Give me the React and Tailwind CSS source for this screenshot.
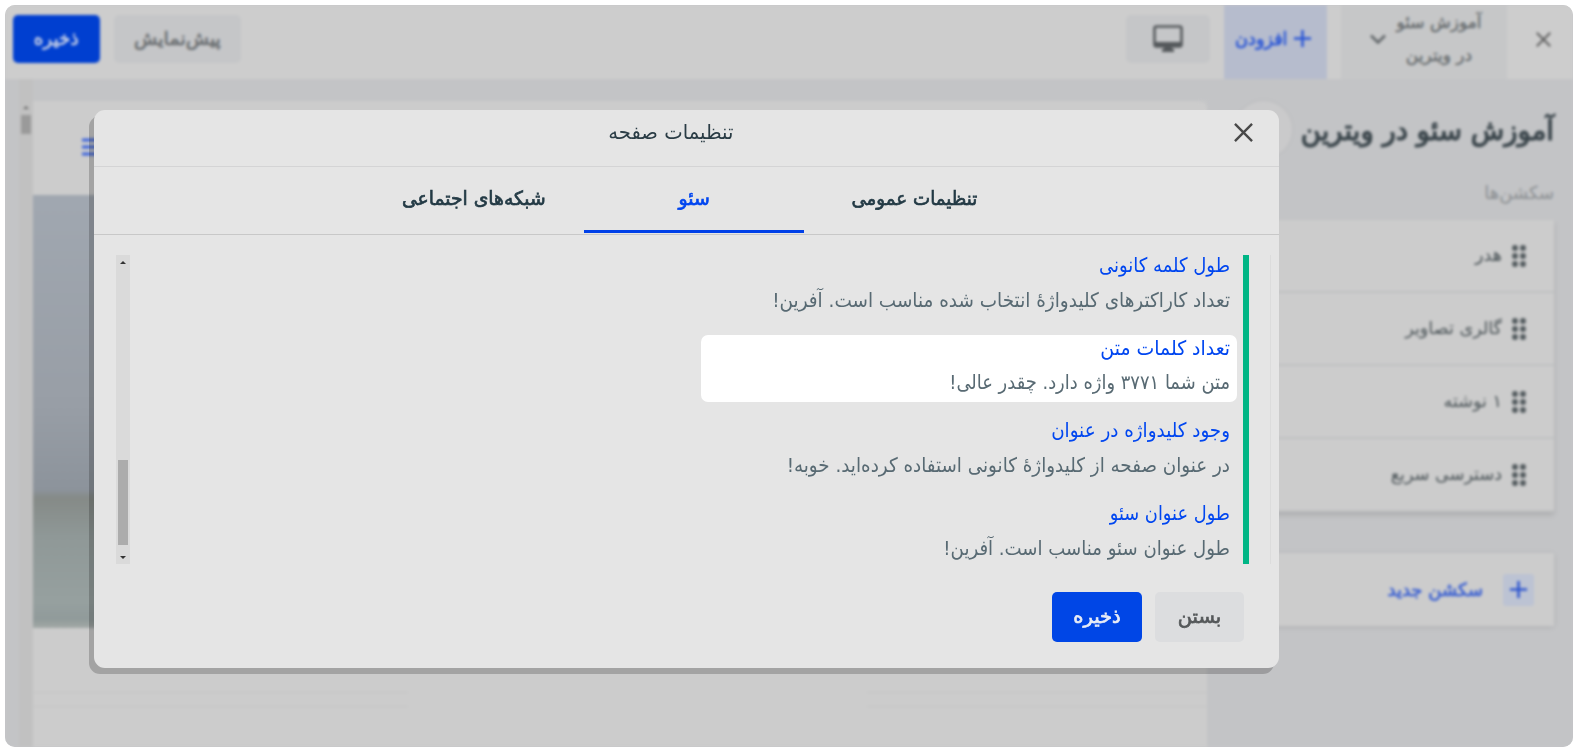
const sections = ['هدر', 'گالری تصاویر', '۱ نوشته', 'دسترسی سریع']

const checks = [
  {
    title: 'طول کلمه کانونی',
    titleFit: 'scale-x-[0.9]',
    text: 'تعداد کاراکترهای کلیدواژهٔ انتخاب شده مناسب است. آفرین!',
    textFit: 'scale-x-[0.92]',
  },
  {
    title: 'تعداد کلمات متن',
    titleFit: 'scale-x-[0.943]',
    text: 'متن شما ۳۷۷۱ واژه دارد. چقدر عالی!',
    textFit: 'scale-x-[0.895]',
    active: true,
  },
  {
    title: 'وجود کلیدواژه در عنوان',
    titleFit: 'scale-x-[0.915]',
    text: 'در عنوان صفحه از کلیدواژهٔ کانونی استفاده کرده‌اید. خوبه!',
    textFit: 'scale-x-[0.915]',
  },
  {
    title: 'طول عنوان سئو',
    titleFit: 'scale-x-[0.89]',
    text: 'طول عنوان سئو مناسب است. آفرین!',
    textFit: 'scale-x-[0.905]',
  },
]

function Cross({ className }) {
  return (
    <svg viewBox="0 0 20 20" className={className} fill="none" stroke="currentColor">
      <path d="M1 1 L19 19 M19 1 L1 19" />
    </svg>
  )
}

function Plus({ className }) {
  return (
    <svg viewBox="0 0 20 20" className={className} fill="none" stroke="currentColor" strokeWidth="2.7">
      <path d="M10 1 V19 M1 10 H19" />
    </svg>
  )
}

function Grip() {
  return (
    <svg viewBox="0 0 14 22" className="h-[22px] w-[14px] fill-[#50585c]">
      {[3, 11, 19].map(y => [3, 11].map(x => <circle key={x + '-' + y} cx={x} cy={y} r="2.9" />))}
    </svg>
  )
}

function TopBar() {
  return (
    <header className="flex h-[74px] shrink-0 items-center bg-[#cdcdcd] pl-2 whitespace-nowrap">
      <div className="flex w-[60px] justify-center pb-1.5 text-[#5c5c5c]">
        <Cross className="size-[15px] stroke-[2.4]" />
      </div>
      <div className="mr-1.5 flex h-full w-[166px] items-center justify-center gap-2.5 bg-[#c6c7c8] pb-1.5 pl-1 text-[#62676a]">
        <div className="text-center text-[17px] leading-[33px] [-webkit-text-stroke:0.3px]">
          <div>آموزش سئو</div>
          <div>در ویترین</div>
        </div>
        <svg viewBox="0 0 16 10" className="h-[10px] w-[16px]" fill="none" stroke="currentColor" strokeWidth="2.6">
          <path d="M1 1.5 L8 8.5 L15 1.5" />
        </svg>
      </div>
      <div className="mr-3.5 flex h-full w-[103px] items-center justify-center gap-[5px] bg-[#b6bccd] pr-[5px] pb-2 text-[18px] text-[#2a56d6] [-webkit-text-stroke:0.7px]">
        <Plus className="size-[19px]" />
        <span className="origin-right scale-x-[0.98]">افزودن</span>
      </div>
      <div className="-mt-1.5 mr-3.5 flex h-[48px] w-[84px] items-center justify-center rounded-[5px] bg-[#c5c6c8]">
        <svg viewBox="0 0 30 28" className="h-[28px] w-[30px] text-[#54585b]">
          <rect x="1.5" y="1.5" width="27" height="20" rx="2" fill="none" stroke="currentColor" strokeWidth="2.6" />
          <path d="M1 17 H29 V21.5 H19 V24 H21 V27 H9 V24 H11 V21.5 H1 Z" fill="currentColor" />
        </svg>
      </div>
      <div className="flex-1" />
      <div className="-mt-1.5 flex h-[48px] w-[127px] items-center justify-center rounded-[5px] bg-[#c5c6c8] pb-0.5 text-[19px] text-[#686c6f] [-webkit-text-stroke:0.6px]">پیش‌نمایش</div>
      <div className="-mt-1.5 mr-3.5 flex h-[48px] w-[87px] items-center justify-center rounded-[5px] bg-[#003fd0] pb-0.5 text-[19px] text-[#c5cfe6] [-webkit-text-stroke:0.7px]">
        <span className="scale-x-[0.97]">ذخیره</span>
      </div>
    </header>
  )
}

function Sidebar() {
  return (
    <aside className="relative w-[366px] shrink-0 bg-[#c3c4c6] pr-[19px] pt-[30px]">
      <div className="absolute right-[281px] top-[22px] size-[57px] rounded-full bg-[#cacacb] shadow-[0_0_4px_rgba(0,0,0,0.05)]" />
      <h1 className="h-[46px] origin-right scale-x-[0.98] text-[28px] leading-[44px] whitespace-nowrap text-[#3a454b] [-webkit-text-stroke:1.2px]">آموزش سئو در ویترین</h1>
      <p className="mt-[22px] h-[30px] text-[18px] leading-[32px] text-[#8b8f92]">سکشن‌ها</p>
      <div className="mt-[13px] flex flex-col bg-[#cccccc] shadow-[0_3px_5px_rgba(0,0,0,0.12)]">
        {sections.map(name => (
          <div key={name} className="flex h-[73px] items-center gap-2.5 border-b-2 border-[#bfc1c2] pr-[28px] text-[17.6px] text-[#4a5357]">
            <Grip />
            <span>{name}</span>
          </div>
        ))}
      </div>
      <div className="mt-[41px] flex h-[73px] items-center bg-[#cccccc] pr-[20px] shadow-[0_1px_5px_rgba(0,0,0,0.1)]">
        <div className="flex h-[32px] w-[31px] items-center justify-center rounded-[3px] bg-[#bcc3d3] text-[#2c55cf]">
          <Plus className="size-[19px]" />
        </div>
        <span className="mr-[20px] text-[18px] text-[#3a60d2] [-webkit-text-stroke:0.7px]">سکشن جدید</span>
      </div>
    </aside>
  )
}

function Preview() {
  return (
    <section dir="ltr" className="flex flex-1">
      <div className="w-[14px] bg-[#c3c4c6]" />
      <div className="flex w-[14px] flex-col items-center bg-[#c1c1c1] pt-[27px]">
        <div className="h-0 w-0 border-x-3 border-b-3 border-x-transparent border-b-[#6d6d6d]" />
        <div className="mt-[6px] h-[19px] w-[10px] bg-[#9a9a9a]" />
      </div>
      <div className="flex flex-1 flex-col">
        <div className="h-[22px] bg-[#c3c4c6]" />
        <div className="flex-1 rounded-tr-[8px] bg-[#cccccc]">
          <div className="flex h-[94px] pl-[49px] pt-[37px]">
            <svg viewBox="0 0 24 18" className="h-[18px] w-[24px]" stroke="#3a62dc" strokeWidth="3">
              <path d="M0 2 H24 M0 9 H24 M0 16 H24" />
            </svg>
          </div>
          {/* sky, horizon, sea */}
          <div className="h-[433px] bg-[linear-gradient(to_bottom,#a0a7b0_0%,#989ea6_48%,#8c939b_68%,#858a87_70%,#8f9897_79%,#96a09f_94%,#909a9a_98%,#a2a9a6_100%)]" />
          <div className="mt-[64px] flex justify-between">
            <div className="h-[15px] w-[375px] border-y border-[#c4c5c5]" />
            <div className="h-[15px] w-[340px] border-y border-[#c4c5c5]" />
          </div>
        </div>
      </div>
    </section>
  )
}

function CheckItem({ title, titleFit, text, textFit, active }) {
  return (
    <div className={`h-[67px] w-[536px] shrink-0 rounded-[7px] pr-[7px] text-[20px] leading-[27px] whitespace-nowrap ${active ? 'bg-white' : ''}`}>
      <div className={`h-[27px] origin-right text-[#0046f0] ${titleFit}`}>{title}</div>
      <div className={`mt-[7.5px] h-[27px] origin-right text-[#586a73] ${textFit}`}>{text}</div>
    </div>
  )
}

function Modal() {
  return (
    <div className="absolute left-[89px] top-[105px] flex h-[558px] w-[1185px] flex-col rounded-[11px] bg-[#e5e5e5] shadow-[-5px_6px_0_rgba(0,0,0,0.2)]">
      <div className="relative flex h-[57px] shrink-0 justify-center border-b border-[#d4d4d5] pr-[32px] pt-[7px]">
        <h2 className="scale-x-[0.98] text-[20px] leading-[30px] text-[#2a3c45]">تنظیمات صفحه</h2>
        <button className="absolute right-[26px] top-[13px] text-[#484848]">
          <Cross className="size-[19px] stroke-[2.5]" />
        </button>
      </div>
      <div className="flex h-[68px] shrink-0 border-b border-[#c8c8c8] pr-[255px] text-[19.5px] text-[#233a45] [-webkit-text-stroke:0.7px]">
        <div className="flex h-[66px] w-[220px] items-center justify-center pb-0.5">
          <span className="scale-x-[0.935]">تنظیمات عمومی</span>
        </div>
        <div className="flex h-[66px] w-[220px] items-center justify-center border-b-3 border-[#0040e8] pt-px text-[#0046f0]">
          <span className="scale-x-[0.97]">سئو</span>
        </div>
        <div className="flex h-[66px] w-[220px] items-center justify-center pb-0.5">
          <span className="scale-x-[0.96]">شبکه‌های اجتماعی</span>
        </div>
      </div>

      <div className="mt-[20px] flex h-[309px] shrink-0 pr-[8px] pl-[22px]">
        <div className="w-px bg-[#dcdcdc]" />
        <div className="mr-[21px] w-[6px] bg-[#00b585]" />
        <div className="mr-[6px] -mt-[3px] flex flex-1 flex-col gap-[15.7px]">
          {checks.map(c => <CheckItem key={c.title} {...c} />)}
        </div>
        <div className="flex w-[14px] flex-col items-center bg-[#dadada]">
          <div className="mt-[6px] h-0 w-0 border-x-3 border-b-3 border-x-transparent border-b-[#333]" />
          <div className="mt-[196px] h-[85px] w-[10px] bg-[#acacac]" />
          <div className="mt-[11px] h-0 w-0 border-x-3 border-t-3 border-x-transparent border-t-[#333]" />
        </div>
      </div>

      <div className="mt-[28px] flex gap-[13px] pr-[35px] text-[19.5px] [-webkit-text-stroke:0.7px]">
        <button className="h-[50px] w-[89px] rounded-[5px] bg-[#dcdddf] pb-px text-[#55585a]">بستن</button>
        <button className="h-[50px] w-[90px] rounded-[5px] bg-[#0046e6] pb-px text-[#e8ecf6]">ذخیره</button>
      </div>
    </div>
  )
}

export default function App() {
  return (
    <div dir="rtl" className="h-[754px] w-[1579px] overflow-hidden bg-white pt-[5px] pr-[6px] font-['DejaVu_Sans',sans-serif]">
      <div className="relative h-[742px] w-[1568px] overflow-hidden rounded-[10px] bg-[#c6c7c8]">
        <div className="flex h-[742px] flex-col blur-[1.4px]">
          <TopBar />
          <div className="flex flex-1">
            <Sidebar />
            <Preview />
          </div>
        </div>
        <Modal />
      </div>
    </div>
  )
}
